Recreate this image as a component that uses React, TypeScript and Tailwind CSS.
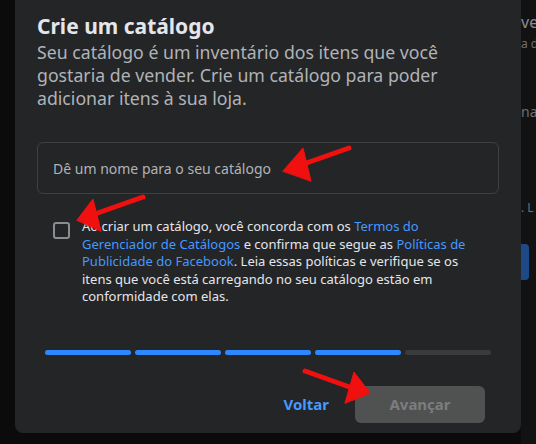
export default function App() {
	const steps = [true, true, true, true, false];

	return (
		<div className="relative w-[536px] h-[444px] overflow-hidden bg-[#0b0b0b] flex font-['Noto_Sans',sans-serif]">
			<div className="w-[15px] shrink-0" />
			<div className="w-[506px] shrink-0 h-[433px] bg-[#242526] rounded-b-[8px] px-[22px] flex flex-col">
				<h1 className="pt-[14px] text-[21px] leading-[24px] font-bold text-[#e4e6eb]">Crie um catálogo</h1>
				<p className="mt-[3px] text-[17.7px] leading-[23px] text-[#b0b3b8]">
					Seu catálogo é um inventário dos itens que você gostaria de vender. Crie um catálogo para poder adicionar itens à sua loja.
				</p>
				<div className="mt-[32px] h-[52px] rounded-[6px] border border-[#3e4042] flex items-center px-[15px] text-[14px] text-[#b0b3b8]">
					Dê um nome para o seu catálogo
				</div>
				<div className="mt-[24px] flex gap-[12px] pl-[16px] pr-[22px]">
					<div className="mt-[4px] w-[17px] h-[17px] shrink-0 rounded-[3px] border-2 border-[#8a8d91]" />
					<p className="text-[13px] leading-[17.5px] text-[#e4e6eb]">
						Ao criar um catálogo, você concorda com os <span className="text-[#4599ff]">Termos do Gerenciador de Catálogos</span> e confirma que segue as{" "}
						<span className="text-[#4599ff]">Políticas de Publicidade do Facebook</span>. Leia essas políticas e verifique se os itens que você está carregando no seu catálogo estão em conformidade com elas.
					</p>
				</div>
				<div className="mt-[44px] mx-[8px] flex gap-[4px]">
					{steps.map((on, i) => (
						<div key={i} className={`flex-1 h-[5px] rounded-full ${on ? "bg-[#2d88ff]" : "bg-[#3a3b3c]"}`} />
					))}
				</div>
				<div className="mt-[31px] flex justify-end items-center gap-[26px] pr-[14px]">
					<span className="text-[15px] font-bold text-[#4599ff]">Voltar</span>
					<div className="w-[130px] h-[37px] rounded-[6px] bg-[#505151] flex items-center justify-center text-[15px] font-bold text-[#7c7d7e]">
						Avançar
					</div>
				</div>
			</div>
			<div className="flex-1 bg-[#121212] pt-[12px] text-[#6e7073] text-[16px] whitespace-nowrap overflow-hidden">
				<div className="leading-[20px] text-[#8a8c8f]">ve</div>
				<div className="mt-[2px] text-[12px] leading-[20px]">a d</div>
				<div className="mt-[48px] text-[14px] leading-[20px]">na</div>
				<div className="mt-[76px] text-[12px] leading-[20px]">. L</div>
				<div className="mt-[26px] h-[36px] w-[8px] rounded-r-[4px] bg-[#1d4a86]" />
			</div>
			<svg className="absolute inset-0 pointer-events-none" width="536" height="444" viewBox="0 0 536 444">
				<g stroke="#f01010" strokeWidth="5" strokeLinecap="round" fill="#f01010">
					<line x1="349" y1="148" x2="298" y2="166" />
					<polygon points="283,171 303,148 311,181" strokeWidth="1" strokeLinejoin="round" />
					<line x1="143" y1="197" x2="92" y2="215" />
					<polygon points="77,220 93,199 101,231" strokeWidth="1" strokeLinejoin="round" />
					<line x1="305" y1="371" x2="355" y2="389" />
					<polygon points="370,393 354,372 345,403" strokeWidth="1" strokeLinejoin="round" />
				</g>
			</svg>
		</div>
	);
}
